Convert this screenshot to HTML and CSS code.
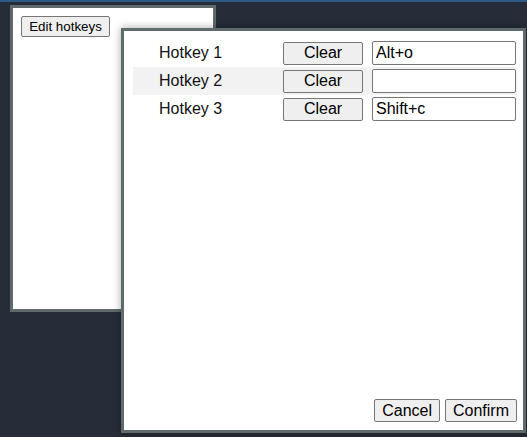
FILE: index.html
```html
<!DOCTYPE html>
<html>
<head>
<meta charset="utf-8">
<link rel="stylesheet" href="styles.css">
</head>
<body>
<div class="desktop">
  <div class="window main-window">
    <button class="btn small">Edit hotkeys</button>
  </div>
  <div class="window modal">
    <div class="rows">
      <div class="row">
        <span class="label">Hotkey 1</span>
        <button class="btn clear">Clear</button>
        <input class="field" type="text" value="Alt+o">
      </div>
      <div class="row alt">
        <span class="label">Hotkey 2</span>
        <button class="btn clear">Clear</button>
        <input class="field" type="text" value="">
      </div>
      <div class="row">
        <span class="label">Hotkey 3</span>
        <button class="btn clear">Clear</button>
        <input class="field" type="text" value="Shift+c">
      </div>
    </div>
    <div class="footer">
      <button class="btn big">Cancel</button>
      <button class="btn big">Confirm</button>
    </div>
  </div>
</div>
</body>
</html>
```

FILE: styles.css
```css
* { box-sizing: border-box; }
html, body {
  margin: 0;
  padding: 0;
  width: 527px;
  height: 437px;
  overflow: hidden;
}
body {
  background: #262c38;
  font-family: "Liberation Sans", Arial, sans-serif;
  color: #111;
}
.desktop {
  position: relative;
  width: 527px;
  height: 437px;
  border-top: 2px solid #2c5a85;
}
.window {
  position: absolute;
  background: #fff;
  border: 3px solid #5f6a6c;
}
.main-window {
  left: 10px;
  top: 3px;
  width: 206px;
  height: 307px;
  padding: 8px;
}
.modal {
  left: 121px;
  top: 26px;
  width: 405px;
  height: 405px;
  padding: 8px 6px 8px 9px;
  display: flex;
  flex-direction: column;
  box-shadow: 0 0 8px rgba(0, 0, 0, 0.35);
}
.btn {
  font-family: "Liberation Sans", Arial, sans-serif;
  background: #efefef;
  border: 1px solid #767676;
  border-radius: 2px;
  color: #000;
  margin: 0;
}
.btn.small {
  font-size: 13.33px;
  height: 21px;
  width: 89px;
  padding: 0;
}
.rows {
  display: flex;
  flex-direction: column;
  flex: 1;
}
.row {
  display: flex;
  align-items: center;
  height: 28px;
}
.row.alt { background: #f2f2f2; }
.label {
  width: 150px;
  padding-left: 26px;
  font-size: 16px;
}
.btn.clear {
  width: 80px;
  height: 23px;
  font-size: 16px;
  padding: 0;
  margin-right: 9px;
}
.field {
  width: 144px;
  height: 24px;
  border: 1px solid #767676;
  border-radius: 2px;
  padding: 1px 3px;
  font-family: "Liberation Sans", Arial, sans-serif;
  font-size: 16px;
  color: #000;
  margin: 0;
}
.footer {
  display: flex;
  justify-content: flex-end;
  gap: 5px;
}
.btn.big {
  font-size: 16px;
  height: 23px;
  padding: 0 7px;
}
```
